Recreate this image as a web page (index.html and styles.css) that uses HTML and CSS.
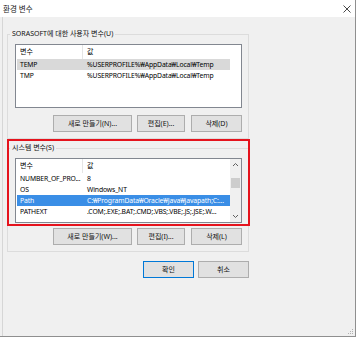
FILE: index.html
```html
<!DOCTYPE html>
<html lang="ko">
<head>
<meta charset="utf-8">
<link rel="stylesheet" href="styles.css">
</head>
<body>
<div class="window">
  <div class="titlebar">
    <span class="title">환경 변수</span>
    <svg class="close" width="8" height="8" viewBox="0 0 8 8"><path d="M0.5 0.5L7.5 7.5M7.5 0.5L0.5 7.5" stroke="#333" stroke-width="0.9" fill="none"/></svg>
  </div>
  <div class="client">
    <fieldset class="group g-user">
      <legend>SORASOFT에 대한 사용자 변수(U)</legend>
      <div class="list l-user">
        <div class="lv">
          <div class="lv-head"><span class="c1">변수</span><span class="c2 sep">값</span></div>
          <div class="row sel-dim"><span class="c1">TEMP</span><span class="c2">%USERPROFILE%₩AppData₩Local₩Temp</span></div>
          <div class="row"><span class="c1">TMP</span><span class="c2">%USERPROFILE%₩AppData₩Local₩Temp</span></div>
        </div>
      </div>
      <div class="btnrow btnrow-user">
        <button class="btn b-new">새로 만들기(N)...</button>
        <button class="btn b-edit">편집(E)...</button>
        <button class="btn b-del">삭제(D)</button>
      </div>
    </fieldset>
    <fieldset class="group g-sys">
      <legend>시스템 변수(S)</legend>
      <div class="list l-sys">
        <div class="lv">
          <div class="lv-head"><span class="c1">변수</span><span class="c2 sep">값</span></div>
          <div class="row"><span class="c1">NUMBER_OF_PRO...</span><span class="c2">8</span></div>
          <div class="row"><span class="c1">OS</span><span class="c2">Windows_NT</span></div>
          <div class="row sel"><span class="c1">Path</span><span class="c2">C:₩ProgramData₩Oracle₩Java₩javapath;C:...</span></div>
          <div class="row"><span class="c1">PATHEXT</span><span class="c2">.COM;.EXE;.BAT;.CMD;.VBS;.VBE;.JS;.JSE;.W...</span></div>
        </div>
        <div class="vscroll">
          <div class="arrow"><svg width="7" height="5" viewBox="0 0 7 5"><path d="M1 4L3.5 1.5L6 4" stroke="#606060" stroke-width="1" fill="none"/></svg></div>
          <div class="track"><div class="thumb"></div></div>
          <div class="arrow"><svg width="7" height="5" viewBox="0 0 7 5"><path d="M1 1L3.5 3.5L6 1" stroke="#606060" stroke-width="1" fill="none"/></svg></div>
        </div>
      </div>
      <div class="btnrow btnrow-sys">
        <button class="btn b-new">새로 만들기(W)...</button>
        <button class="btn b-edit">편집(I)...</button>
        <button class="btn b-del">삭제(L)</button>
      </div>
    </fieldset>
    <div class="dlgbtns">
      <button class="btn b-ok">확인</button>
      <button class="btn b-cancel">취소</button>
    </div>
    <div class="highlight"></div>
    <svg class="grip" width="5" height="5" viewBox="0 0 5 5"><rect x="4" y="0" width="1" height="1" fill="#b0b0b0"/><rect x="2" y="2" width="1" height="1" fill="#b0b0b0"/><rect x="4" y="2" width="1" height="1" fill="#b0b0b0"/><rect x="0" y="4" width="1" height="1" fill="#b0b0b0"/><rect x="2" y="4" width="1" height="1" fill="#b0b0b0"/><rect x="4" y="4" width="1" height="1" fill="#b0b0b0"/></svg>
  </div>
</div>
</body>
</html>
```
FILE: styles.css
```css
* { box-sizing: border-box; margin: 0; padding: 0; }
html, body { background: #fff; }
body {
  width: 361px;
  height: 341px;
  overflow: hidden;
  font-family: "Noto Sans", "Noto Sans CJK KR", sans-serif;
  font-size: 7px;
  color: #000;
}
.window {
  width: 356px;
  height: 337px;
  border-right: 1px solid #8f8f8f;
  border-bottom: 1px solid #8f8f8f;
  display: flex;
  flex-direction: column;
  background: #f0f0f0;
}
.titlebar {
  height: 17px;
  flex: none;
  background: #fff;
  display: flex;
  align-items: center;
  justify-content: space-between;
  padding: 0 4px 0 3px;
}
.title { font-size: 7.5px; color: #111; }
.client {
  flex: 1;
  margin-left: 2px;
  border-left: 1px solid #d6d6d6;
  position: relative;
  padding: 12px 0 0 4px;
}
fieldset.group {
  width: 242px;
  border: 1px solid #dcdcdc;
  padding: 5px 6px 6px 7px;
  min-width: 0;
}
.g-sys { margin-top: 4px; }
legend {
  padding: 0 2px;
  margin-left: -5px;
  line-height: 10px;
  color: #111;
}
.list {
  border: 1px solid #828790;
  background: #fff;
  display: flex;
}
.l-user { height: 64px; }
.l-sys { height: 65px; }
.lv { flex: 1; padding-left: 1px; }
.lv-head, .row {
  display: flex;
  width: 213px;
  white-space: nowrap;
  overflow: hidden;
}
.lv-head { height: 14px; line-height: 14px; }
.row { height: 11px; line-height: 11px; letter-spacing: -0.12px; font-size: 6.8px; }
.c1 { width: 65px; padding-left: 3px; overflow: hidden; flex: none; }
.c2 { flex: 1; padding-left: 4px; border-left: 1px solid transparent; overflow: hidden; }
.c2.sep { border-left-color: #e5e5e5; }
.sel-dim { background: #d9d9d9; }
.sel { background: #3a8ee6; color: #fff; }
.vscroll {
  width: 11px;
  flex: none;
  background: #f0f0f0;
  display: flex;
  flex-direction: column;
}
.arrow {
  height: 11px;
  display: flex;
  align-items: center;
  justify-content: center;
}
.track { flex: 1; padding: 8px 1px 0; }
.thumb { height: 10px; background: #cdcdcd; }
.btnrow { display: flex; justify-content: flex-end; }
.btnrow-user { margin-top: 7px; }
.btnrow-sys { margin-top: 5px; }
.btn {
  height: 17px;
  background: #e1e1e1;
  border: 1px solid #adadad;
  font: inherit;
  color: #111;
  line-height: 15px;
}
.b-new { width: 79px; }
.b-edit { width: 48px; margin-left: 5px; }
.b-del { width: 51px; margin-left: 6px; }
.dlgbtns {
  width: 242px;
  margin-top: 9px;
  display: flex;
  justify-content: flex-end;
}
.b-ok { width: 51px; border-color: #0078d7; }
.b-cancel { width: 51px; margin-left: 4px; }
.highlight {
  position: absolute;
  left: 4px;
  top: 122px;
  width: 243px;
  height: 87px;
  border: 2px solid #e5131d;
}
.grip { position: absolute; right: 2px; bottom: 2px; }
```
